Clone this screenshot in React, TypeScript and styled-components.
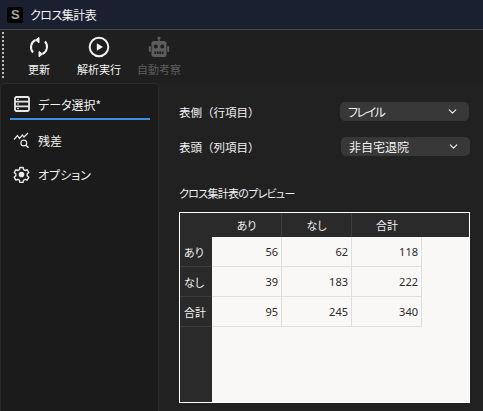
import React from 'react'
import styled, { createGlobalStyle } from 'styled-components'
import { ChevronDown } from 'lucide-react'

const GlobalStyle = createGlobalStyle`
  html, body {
    margin: 0;
    padding: 0;
    background: #1f1f1f;
  }
  * {
    box-sizing: border-box;
  }
`

const Window = styled.div`
  width: 483px;
  height: 411px;
  overflow: hidden;
  display: flex;
  flex-direction: column;
  background: #1f1f1f;
  color: #f2f2f2;
  font-family: 'Noto Sans CJK JP', 'Noto Sans', sans-serif;
  font-size: 11px;
  font-feature-settings: 'palt';
`

const TitleBar = styled.div`
  height: 30px;
  flex: none;
  display: flex;
  align-items: center;
  gap: 7px;
  padding-left: 7px;
  background: #1b2030;
  border-bottom: 1px solid #4a4a4a;
  font-size: 12px;
  letter-spacing: -0.5px;
`

const AppIcon = styled.div`
  width: 16px;
  height: 16px;
  border-radius: 2px;
  background: #050505;
  color: #a8a8a8;
  font: 700 13px/16px 'Liberation Sans', sans-serif;
  text-align: center;
`

const Toolbar = styled.div`
  height: 53px;
  flex: none;
  display: flex;
  padding-left: 2px;
  background: #1f1f1f;
`

const Grip = styled.div`
  width: 11px;
  height: 46px;
  margin-top: 2px;
  border-left: 2px dotted #bdbdbd;
`

const ToolButton = styled.div<{ $disabled?: boolean; $width: number }>`
  width: ${p => p.$width}px;
  display: flex;
  flex-direction: column;
  align-items: center;
  padding-top: 6px;
  gap: 4px;
  font-size: 11px;
  line-height: 14px;
  white-space: nowrap;
  color: ${p => (p.$disabled ? '#5c5c5c' : '#f2f2f2')};
`

const Body = styled.div`
  flex: 1;
  display: flex;
  min-height: 0;
`

const SidePanel = styled.div`
  width: 159px;
  flex: none;
  padding: 6px 8px 0 9px;
  background: #1b1b1b;
  border-top: 1px solid #2a2a2a;
  border-left: 1px solid #2a2a2a;
  border-right: 1px solid #2a2a2a;
  border-top-left-radius: 5px;
  border-top-right-radius: 5px;
`

const NavItem = styled.div<{ $active?: boolean }>`
  height: ${p => (p.$active ? 30 : 34)}px;
  display: flex;
  align-items: center;
  gap: 8px;
  padding-left: 4px;
  font-size: 12px;
  border-bottom: ${p => (p.$active ? '2px solid #3b8fe0' : 'none')};
  &:nth-child(2) {
    margin-top: 3px;
  }
`

const WideIcon = styled.svg`
  flex: none;
  margin-left: -1px;
`

const Content = styled.div`
  flex: 1;
  display: flex;
  flex-direction: column;
  padding: 19px 14px 0 20px;
  background: #212121;
`

const FieldRow = styled.div`
  height: 19px;
  display: flex;
  align-items: center;
  justify-content: space-between;
  margin-bottom: 16px;
`

const FieldLabel = styled.span`
  padding-top: 1px;
  font-size: 11.5px;
  font-feature-settings: normal;
`

const Select = styled.div<{ $shift?: boolean }>`
  width: 129px;
  height: 19px;
  display: flex;
  align-items: center;
  justify-content: space-between;
  padding: 0 10px 0 8px;
  margin-right: ${p => (p.$shift ? 0 : 1)}px;
  border-radius: 5px;
  background: #383838;
  font-size: 12px;
`

const SelectValue = styled.span<{ $kana?: boolean }>`
  letter-spacing: ${p => (p.$kana ? '-1.5px' : '0')};
`

const PreviewLabel = styled.div`
  margin-top: 13px;
  margin-bottom: 10px;
  line-height: 17px;
  font-size: 11px;
  letter-spacing: -0.7px;
`

const Preview = styled.div`
  width: 291px;
  height: 191px;
  flex: none;
  display: grid;
  grid-template-columns: 32px 1fr;
  grid-template-rows: 24px 1fr;
  border: 1px solid #ffffff;
  background: #faf8f6;
`

const Corner = styled.div`
  background: #2a2a2a;
`

const ColumnHeaders = styled.div`
  display: flex;
  background: #2a2a2a;
`

const ColumnHeader = styled.div`
  width: 70px;
  display: flex;
  align-items: center;
  justify-content: center;
  border-right: 1px solid #3d3d3d;
  font-size: 11px;
  &:last-child {
    border-right: none;
  }
`

const RowHeaders = styled.div`
  display: flex;
  flex-direction: column;
  background: #2a2a2a;
`

const RowHeader = styled.div`
  height: 30px;
  display: flex;
  align-items: center;
  padding-left: 4px;
  border-bottom: 1px solid #3d3d3d;
  font-size: 11px;
`

const Cells = styled.div`
  display: grid;
  grid-template-columns: repeat(3, 70px);
  grid-auto-rows: 30px;
  align-content: start;
`

const Cell = styled.div`
  display: flex;
  align-items: center;
  justify-content: flex-end;
  padding-right: 3px;
  border-right: 1px solid #dfdfdf;
  border-bottom: 1px solid #dfdfdf;
  color: #2a2a2a;
  font-family: 'Noto Sans', sans-serif;
  font-size: 11px;
`

const RefreshIcon = () => (
  <svg width="22" height="22" viewBox="0 0 22 22" fill="none" stroke="#f2f2f2" strokeWidth="2">
    <path d="M5 16.5A8 8 0 0 1 7.5 4" />
    <path d="M17 5.5A8 8 0 0 1 14.5 18" />
    <path d="M11 1.500 7.500 4l3.500 2.800z" fill="#f2f2f2" strokeWidth="1" />
    <path d="M11 15.500 14.500 18 11 20.800z" fill="#f2f2f2" strokeWidth="1" />
  </svg>
)

const PlayIcon = () => (
  <svg width="22" height="22" viewBox="0 0 22 22" fill="none">
    <circle cx="11" cy="11" r="9.300" stroke="#f2f2f2" strokeWidth="2" />
    <path d="M8.800 7.200v7.600L15 11z" fill="#f2f2f2" />
  </svg>
)

const RobotIcon = () => (
  <svg width="22" height="22" viewBox="0 0 22 22" fill="#5c5c5c">
    <circle cx="11" cy="2" r="1.600" />
    <rect x="10.300" y="2.500" width="1.400" height="3" />
    <rect x="3.500" y="5" width="15" height="16" rx="2.500" />
    <rect x="0.800" y="10" width="2" height="6" rx="1" />
    <rect x="19.200" y="10" width="2" height="6" rx="1" />
    <circle cx="7.800" cy="10.500" r="2" fill="#1f1f1f" />
    <circle cx="14.200" cy="10.500" r="2" fill="#1f1f1f" />
    <path d="M6.500 15.500h9v2.500h-9z" fill="#1f1f1f" />
    <path d="M8.500 15.500v2.500M11 15.500v2.500M13.500 15.500v2.500" stroke="#5c5c5c" strokeWidth="0.8" />
  </svg>
)

const TableIcon = () => (
  <svg width="16" height="16" viewBox="0 0 16 16" fill="none" stroke="#e8e8e8" strokeWidth="1.800">
    <rect x="1" y="1" width="14" height="14" rx="1.500" />
    <path d="M1 5.700h14M1 10.300h14" />
    <path d="M3 3.400h2M3 8h2M3 12.600h2" strokeWidth="1" />
  </svg>
)

const ResidualIcon = () => (
  <WideIcon width="17" height="17" viewBox="0 0 17 17" fill="none" stroke="#e8e8e8" strokeWidth="1.200">
    <path d="M1 7.500 4.500 3.500l2 3 3-3.500 1.500 2L15 1" />
    <circle cx="10.800" cy="11" r="2.900" />
    <path d="m13 13.200 2.500 2.600" strokeWidth="1.500" />
    <path d="M4.500 8.500v.01M7 9v.01" strokeWidth="1.200" />
  </WideIcon>
)

const GearIcon = () => (
  <WideIcon width="17" height="17" viewBox="0 0 24 24" fill="none" stroke="#e8e8e8" strokeWidth="2" strokeLinejoin="round">
    <path d="M9.700 2h4.600l.6 3 2.200 1.300 2.900-1 2.300 4-2.300 2v2.500l2.300 2-2.300 4-2.900-1-2.200 1.300-.6 3H9.700l-.6-3-2.200-1.300-2.900 1-2.300-4 2.300-2v-2.500l-2.300-2 2.300-4 2.900 1L9.100 5z" />
    <circle cx="12" cy="12" r="3" fill="#e8e8e8" />
  </WideIcon>
)

const rows = [
  { label: 'あり', values: [56, 62, 118] },
  { label: 'なし', values: [39, 183, 222] },
  { label: '合計', values: [95, 245, 340] }
]

const App: React.FC = () => (
  <Window>
    <GlobalStyle />
    <TitleBar>
      <AppIcon>S</AppIcon>
      <span>クロス集計表</span>
    </TitleBar>
    <Toolbar>
      <Grip />
      <ToolButton $width={52}>
        <RefreshIcon />
        <span>更新</span>
      </ToolButton>
      <ToolButton $width={68}>
        <PlayIcon />
        <span>解析実行</span>
      </ToolButton>
      <ToolButton $width={52} $disabled>
        <RobotIcon />
        <span>自動考察</span>
      </ToolButton>
    </Toolbar>
    <Body>
      <SidePanel>
        <NavItem $active>
          <TableIcon />
          <span>データ選択*</span>
        </NavItem>
        <NavItem>
          <ResidualIcon />
          <span>残差</span>
        </NavItem>
        <NavItem>
          <GearIcon />
          <span>オプション</span>
        </NavItem>
      </SidePanel>
      <Content>
        <FieldRow>
          <FieldLabel>表側（行項目）</FieldLabel>
          <Select>
            <SelectValue $kana>フレイル</SelectValue>
            <ChevronDown size={13} />
          </Select>
        </FieldRow>
        <FieldRow>
          <FieldLabel>表頭（列項目）</FieldLabel>
          <Select $shift>
            <SelectValue>非自宅退院</SelectValue>
            <ChevronDown size={13} />
          </Select>
        </FieldRow>
        <PreviewLabel>クロス集計表のプレビュー</PreviewLabel>
        <Preview>
          <Corner />
          <ColumnHeaders>
            <ColumnHeader>あり</ColumnHeader>
            <ColumnHeader>なし</ColumnHeader>
            <ColumnHeader>合計</ColumnHeader>
          </ColumnHeaders>
          <RowHeaders>
            {rows.map(row => (
              <RowHeader key={row.label}>{row.label}</RowHeader>
            ))}
          </RowHeaders>
          <Cells>
            {rows.flatMap(row =>
              row.values.map((value, i) => <Cell key={row.label + i}>{value}</Cell>)
            )}
          </Cells>
        </Preview>
      </Content>
    </Body>
  </Window>
)

export default App
